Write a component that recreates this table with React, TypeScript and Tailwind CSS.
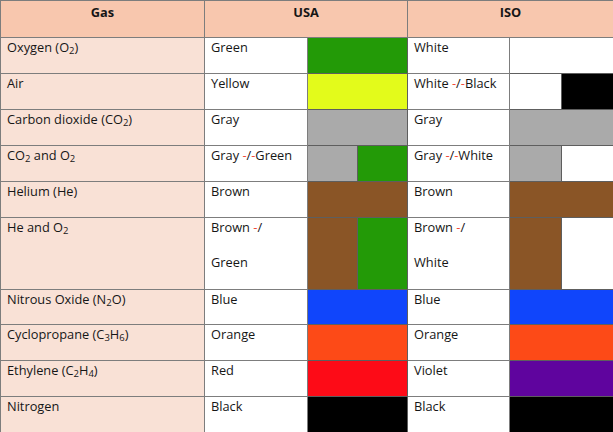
import React from 'react'

type Part = string | { sub: string } | { red: string }

interface GasRow {
  gas: Part[]
  usa: Part[][]
  usaColors: string[]
  iso: Part[][]
  isoColors: string[]
  tall?: boolean
}

const rows: GasRow[] = [
  { gas: ['Oxygen (O', { sub: '2' }, ')'], usa: [['Green']], usaColors: ['bg-[#239a07]'], iso: [['White']], isoColors: ['bg-white'] },
  { gas: ['Air'], usa: [['Yellow']], usaColors: ['bg-[#e3fb1b]'], iso: [['White ', { red: '-' }, '/', { red: '-' }, 'Black']], isoColors: ['bg-white', 'bg-black'] },
  { gas: ['Carbon dioxide (CO', { sub: '2' }, ')'], usa: [['Gray']], usaColors: ['bg-[#aaaaaa]'], iso: [['Gray']], isoColors: ['bg-[#aaaaaa]'] },
  { gas: ['CO', { sub: '2' }, ' and O', { sub: '2' }], usa: [['Gray ', { red: '-' }, '/', { red: '-' }, 'Green']], usaColors: ['bg-[#aaaaaa]', 'bg-[#239a07]'], iso: [['Gray ', { red: '-' }, '/', { red: '-' }, 'White']], isoColors: ['bg-[#aaaaaa]', 'bg-white'] },
  { gas: ['Helium (He)'], usa: [['Brown']], usaColors: ['bg-[#8a5526]'], iso: [['Brown']], isoColors: ['bg-[#8a5526]'] },
  { gas: ['He and O', { sub: '2' }], usa: [['Brown ', { red: '-' }, '/'], ['Green']], usaColors: ['bg-[#8a5526]', 'bg-[#239a07]'], iso: [['Brown ', { red: '-' }, '/'], ['White']], isoColors: ['bg-[#8a5526]', 'bg-white'], tall: true },
  { gas: ['Nitrous Oxide (N', { sub: '2' }, 'O)'], usa: [['Blue']], usaColors: ['bg-[#1045fb]'], iso: [['Blue']], isoColors: ['bg-[#1045fb]'] },
  { gas: ['Cyclopropane (C', { sub: '3' }, 'H', { sub: '6' }, ')'], usa: [['Orange']], usaColors: ['bg-[#fd4a17]'], iso: [['Orange']], isoColors: ['bg-[#fd4a17]'] },
  { gas: ['Ethylene (C', { sub: '2' }, 'H', { sub: '4' }, ')'], usa: [['Red']], usaColors: ['bg-[#fd0b17]'], iso: [['Violet']], isoColors: ['bg-[#5f049e]'] },
  { gas: ['Nitrogen'], usa: [['Black']], usaColors: ['bg-black'], iso: [['Black']], isoColors: ['bg-black'] },
]

const Text: React.FC<{ parts: Part[] }> = ({ parts }) => (
  <>
    {parts.map((p, i) => {
      if (typeof p === 'string') return <span key={i}>{p}</span>
      if ('sub' in p) return <sub key={i} className="text-[9.5px]">{p.sub}</sub>
      return <span key={i} className="text-[#f04a3a]">{p.red}</span>
    })}
  </>
)

const Lines: React.FC<{ lines: Part[][] }> = ({ lines }) => (
  <div className="flex flex-col gap-[17px]">
    {lines.map((l, i) => (
      <div key={i} className="whitespace-nowrap"><Text parts={l} /></div>
    ))}
  </div>
)

const Swatch: React.FC<{ colors: string[] }> = ({ colors }) => (
  <div className="flex h-full">
    {colors.map((c, i) => (
      <div key={i} className={`flex-1 h-full ${c} ${i > 0 ? 'border-l border-[#5e5e5e]' : ''}`} />
    ))}
  </div>
)

export default function App() {
  return (
    <div className="w-[613px] h-[432px] bg-white text-[#161616] font-['Open_Sans','Liberation_Sans',sans-serif] text-[12.8px] leading-[18px]">
      <table className="table-fixed border-collapse w-[613px]">
        <colgroup>
          <col className="w-[204px]" />
          <col className="w-[103px]" />
          <col className="w-[100px]" />
          <col className="w-[102px]" />
          <col className="w-[104px]" />
        </colgroup>
        <thead>
          <tr className="h-[37px] bg-[#f8c7ae]">
            <th className="border border-[#7d7d7d] align-top pt-[2px] font-bold">Gas</th>
            <th colSpan={2} className="border border-[#7d7d7d] align-top pt-[2px] font-bold">USA</th>
            <th colSpan={2} className="border border-[#7d7d7d] align-top pt-[2px] font-bold">ISO</th>
          </tr>
        </thead>
        <tbody>
          {rows.map((r, i) => (
            <tr key={i} className={r.tall ? 'h-[72px]' : i === 6 ? 'h-[35px]' : 'h-[36px]'}>
              <td className="border border-[#7d7d7d] bg-[#f9e1d6] align-top px-[6px] pt-0 whitespace-nowrap">
                <Text parts={r.gas} />
              </td>
              <td className="border border-[#7d7d7d] align-top px-[6px] pt-0">
                <Lines lines={r.usa} />
              </td>
              <td className="border border-[#5e5e5e] p-0 h-[inherit]">
                <Swatch colors={r.usaColors} />
              </td>
              <td className="border border-[#7d7d7d] align-top px-[6px] pt-0">
                <Lines lines={r.iso} />
              </td>
              <td className="border border-[#5e5e5e] p-0 h-[inherit]">
                <Swatch colors={r.isoColors} />
              </td>
            </tr>
          ))}
        </tbody>
      </table>
    </div>
  )
}
